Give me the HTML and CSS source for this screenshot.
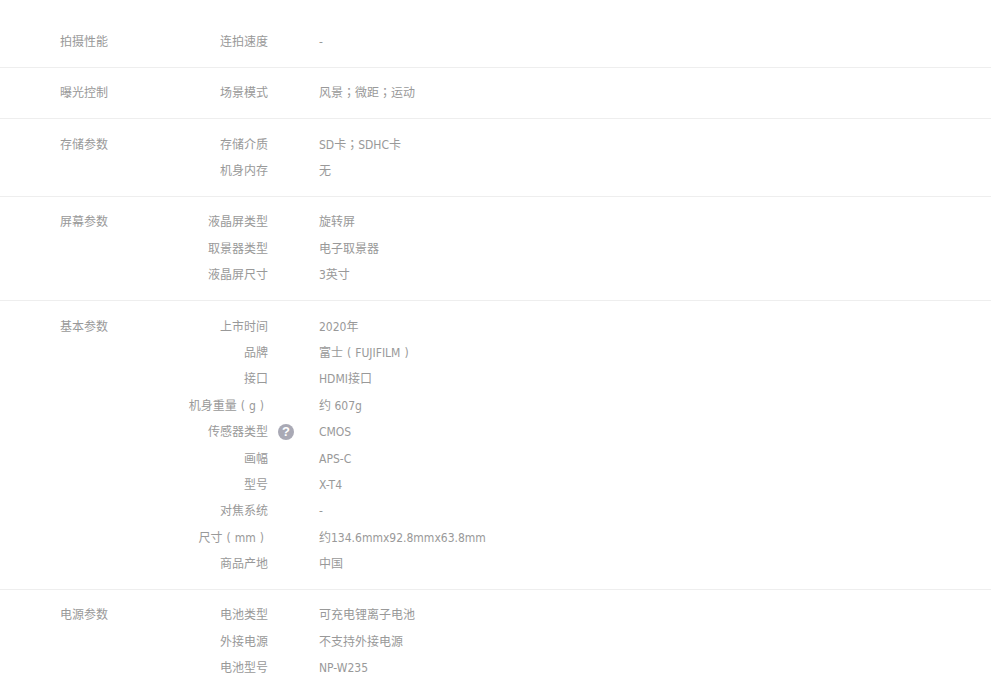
FILE: index.html
```
<!DOCTYPE html>
<html lang="zh-CN">
<head>
<meta charset="utf-8">
<title>参数</title>
<link rel="stylesheet" href="styles.css">
</head>
<body>
<main class="specs">
  <section class="group"><h3 class="group-title">拍摄性能</h3><div class="rows">
    <div class="row"><span class="label">连拍速度</span><span class="hint"></span><span class="value">-</span></div>
  </div></section>
  <section class="group"><h3 class="group-title">曝光控制</h3><div class="rows">
    <div class="row"><span class="label">场景模式</span><span class="hint"></span><span class="value">风景<span class="punct" lang="zh-TW">；</span>微距<span class="punct" lang="zh-TW">；</span>运动</span></div>
  </div></section>
  <section class="group"><h3 class="group-title">存储参数</h3><div class="rows">
    <div class="row"><span class="label">存储介质</span><span class="hint"></span><span class="value">SD卡<span class="punct" lang="zh-TW">；</span>SDHC卡</span></div>
    <div class="row"><span class="label">机身内存</span><span class="hint"></span><span class="value">无</span></div>
  </div></section>
  <section class="group"><h3 class="group-title">屏幕参数</h3><div class="rows">
    <div class="row"><span class="label">液晶屏类型</span><span class="hint"></span><span class="value">旋转屏</span></div>
    <div class="row"><span class="label">取景器类型</span><span class="hint"></span><span class="value">电子取景器</span></div>
    <div class="row"><span class="label">液晶屏尺寸</span><span class="hint"></span><span class="value">3英寸</span></div>
  </div></section>
  <section class="group"><h3 class="group-title">基本参数</h3><div class="rows">
    <div class="row"><span class="label">上市时间</span><span class="hint"></span><span class="value">2020年</span></div>
    <div class="row"><span class="label">品牌</span><span class="hint"></span><span class="value">富士<span class="paren">(</span>FUJIFILM<span class="paren">)</span></span></div>
    <div class="row"><span class="label">接口</span><span class="hint"></span><span class="value">HDMI接口</span></div>
    <div class="row"><span class="label">机身重量<span class="paren">(</span>g<span class="paren">)</span></span><span class="hint"></span><span class="value">约 607g</span></div>
    <div class="row"><span class="label">传感器类型</span><span class="hint"><span class="help">?</span></span><span class="value">CMOS</span></div>
    <div class="row"><span class="label">画幅</span><span class="hint"></span><span class="value">APS-C</span></div>
    <div class="row"><span class="label">型号</span><span class="hint"></span><span class="value">X-T4</span></div>
    <div class="row"><span class="label">对焦系统</span><span class="hint"></span><span class="value">-</span></div>
    <div class="row"><span class="label">尺寸<span class="paren">(</span>mm<span class="paren">)</span></span><span class="hint"></span><span class="value">约134.6mmx92.8mmx63.8mm</span></div>
    <div class="row"><span class="label">商品产地</span><span class="hint"></span><span class="value">中国</span></div>
  </div></section>
  <section class="group"><h3 class="group-title">电源参数</h3><div class="rows">
    <div class="row"><span class="label">电池类型</span><span class="hint"></span><span class="value">可充电锂离子电池</span></div>
    <div class="row"><span class="label">外接电源</span><span class="hint"></span><span class="value">不支持外接电源</span></div>
    <div class="row"><span class="label">电池型号</span><span class="hint"></span><span class="value">NP-W235</span></div>
  </div></section>
</main>
</body>
</html>
```
FILE: styles.css
```
html, body {
  margin: 0;
  padding: 0;
  background: #fff;
  overflow: hidden;
}
body {
  font-family: "DejaVu Sans", "Noto Sans CJK SC", sans-serif;
  font-stretch: condensed;
  font-size: 12px;
  color: #999;
}
.specs {
  padding-top: 16.5px;
}
.group {
  display: flex;
  padding: 12.4px 0 11.6px 60px;
  border-bottom: 1px solid #eee;
}
.group:last-child {
  border-bottom: 0;
}
.group-title {
  flex: 0 0 100px;
  margin: 0;
  font-size: 12px;
  font-weight: 400;
  line-height: 26.4px;
}
.rows {
  flex: 1;
}
.row {
  display: grid;
  grid-template-columns: 108px 51px 1fr;
  height: 26.4px;
  line-height: 26.4px;
}
.label {
  text-align: right;
  white-space: nowrap;
}
.punct {
  font-family: "Noto Sans CJK TC", sans-serif;
  line-height: 0;
}
.paren {
  padding: 0 4px;
}
.hint {
  display: flex;
  align-items: center;
  padding-left: 10px;
}
.help {
  width: 16px;
  height: 16px;
  border-radius: 50%;
  background: #a9a9b5;
  color: #fff;
  font: 700 13px/16px "Liberation Sans", sans-serif;
  text-align: center;
}
```
